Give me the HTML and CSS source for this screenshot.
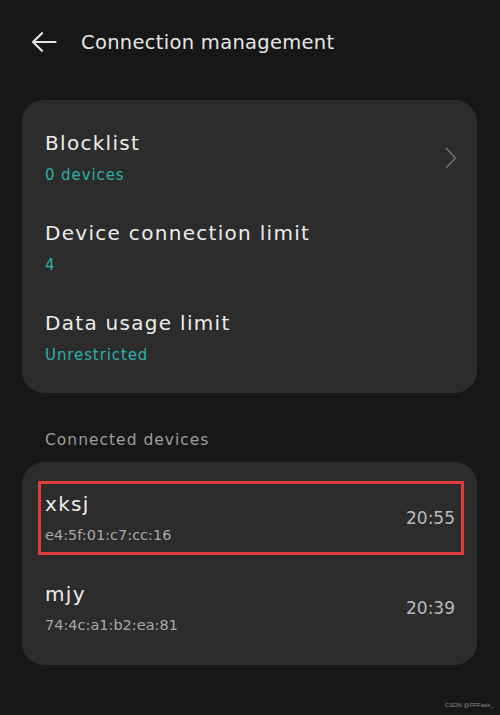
FILE: index.html
```html
<!DOCTYPE html>
<html>
<head>
<meta charset="utf-8">
<link rel="stylesheet" href="styles.css">
</head>
<body>
<div class="screen">
  <header class="topbar">
    <svg class="back" width="26" height="20" viewBox="0 0 26 20"><path d="M24.5 10H2M11 1.2L2 10l9 8.8" fill="none" stroke="#e6e6e6" stroke-width="2.2" stroke-linecap="round" stroke-linejoin="round"/></svg>
    <h1 class="title">Connection management</h1>
  </header>

  <section class="card settings">
    <div class="row">
      <div class="texts">
        <div class="label">Blocklist</div>
        <div class="value">0 devices</div>
      </div>
      <svg class="chev" width="12" height="22" viewBox="0 0 12 22"><path d="M1.5 1.5L10.5 11l-9 9.5" fill="none" stroke="#6a6a6a" stroke-width="1.8" stroke-linecap="round" stroke-linejoin="round"/></svg>
    </div>
    <div class="row">
      <div class="texts">
        <div class="label">Device connection limit</div>
        <div class="value">4</div>
      </div>
    </div>
    <div class="row">
      <div class="texts">
        <div class="label">Data usage limit</div>
        <div class="value">Unrestricted</div>
      </div>
    </div>
  </section>

  <div class="section-title">Connected devices</div>

  <section class="card devices">
    <div class="device highlighted">
      <div class="texts">
        <div class="dname">xksj</div>
        <div class="mac">e4:5f:01:c7:cc:16</div>
      </div>
      <div class="time">20:55</div>
    </div>
    <div class="device">
      <div class="texts">
        <div class="dname">mjy</div>
        <div class="mac">74:4c:a1:b2:ea:81</div>
      </div>
      <div class="time">20:39</div>
    </div>
  </section>

  <div class="credit">CSDN @FFFade_</div>
</div>
</body>
</html>
```

FILE: styles.css
```css
* { box-sizing: border-box; }
html, body {
  margin: 0;
  padding: 0;
  background: #171717;
}
body {
  font-family: "DejaVu Sans", "Noto Sans", sans-serif;
  color: #e8e8e8;
}
.screen {
  width: 500px;
  height: 715px;
  display: flex;
  flex-direction: column;
  position: relative;
  padding: 0 23px 0 22px;
}
.topbar {
  display: flex;
  align-items: center;
  height: 84px;
  padding-left: 9px;
}
.back { flex: none; }
.title {
  margin: 0 0 0 24px;
  font-size: 19.5px;
  font-weight: normal;
  color: #e6e6e6;
  letter-spacing: 0.3px;
}
.card {
  background: #2c2c2c;
  border-radius: 22px;
}
.settings {
  margin-top: 16px;
  padding: 30px 0 28px;
  display: flex;
  flex-direction: column;
  gap: 35px;
}
.row {
  display: flex;
  align-items: center;
  padding: 0 20px 0 23px;
}
.texts { flex: 1; }
.label {
  font-size: 20px;
  color: #ececec;
  line-height: 26px;
  letter-spacing: 1.3px;
}
.value {
  margin-top: 9px;
  font-size: 15px;
  color: #2bb1a8;
  line-height: 20px;
  letter-spacing: 0.9px;
}
.chev { flex: none; }
.section-title {
  margin: 36px 0 0 23px;
  font-size: 15.5px;
  color: #9d9d9d;
  line-height: 22px;
  letter-spacing: 1px;
}
.devices {
  margin-top: 11px;
  padding: 19px 13px 20px 16px;
  display: flex;
  flex-direction: column;
  gap: 16px;
}
.device {
  display: flex;
  align-items: center;
  height: 74px;
  border: 3px solid transparent;
  padding: 0 6px 0 4px;
}
.highlighted {
  border-color: #e23b3b;
}
.dname {
  font-size: 20px;
  color: #ececec;
  line-height: 26px;
  letter-spacing: 1.3px;
}
.mac {
  margin-top: 8px;
  font-size: 14.5px;
  color: #a8a8a8;
  line-height: 20px;
}
.time {
  font-size: 17px;
  color: #bababa;
}
.credit {
  position: absolute;
  right: 6px;
  bottom: 7px;
  font-family: "Liberation Sans", sans-serif;
  font-size: 6px;
  color: #8a8a8a;
}
```
